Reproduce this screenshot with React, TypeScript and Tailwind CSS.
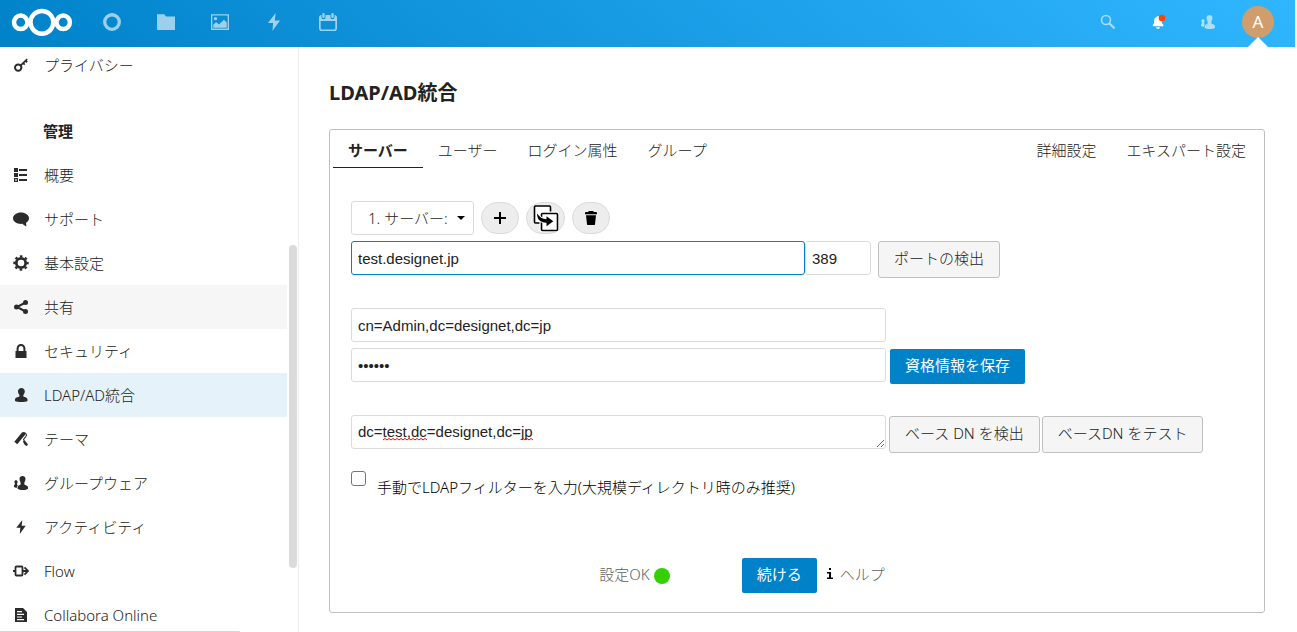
import type { ReactNode } from 'react';

type IconProps = { className?: string };

const Svg = ({ className = 'size-4', children }: IconProps & { children: ReactNode }) => (
  <svg viewBox="0 0 16 16" className={className} fill="currentColor" aria-hidden="true">
    {children}
  </svg>
);

const KeyIcon = (p: IconProps) => (
  <Svg {...p}>
    <circle cx="5.2" cy="10.6" r="3.2" fill="none" stroke="currentColor" strokeWidth="2" />
    <path d="M6.9 8.1 13.6 1.4l1.2 1.2-1 1 1 1-1.5 1.5-1-1-1 1 1 1-1.2 1.2-1-1L8.200 9.400z" />
  </Svg>
);

const ListIcon = (p: IconProps) => (
  <Svg {...p}>
    <path d="M1 1h4v4H1zM1 6h4v4H1zM6 2h8v2H6zM6 7h8v2H6zM6 12h8v2H6z" />
    <path d="M1 11h4v4H1zm1.200 1.200v1.600h1.600v-1.600z" fillRule="evenodd" />
  </Svg>
);

const CommentIcon = (p: IconProps) => (
  <Svg {...p}>
    <path d="M8 1.500c4.400 0 8 2.500 8 5.700 0 1.900-1.200 3.500-3 4.500.1 1.300.4 2.600.4 3.800-1.600-.6-3-1.500-4-2.700-.4.1-.9.1-1.400.1-4.400 0-8-2.500-8-5.700S3.600 1.500 8 1.500z" />
  </Svg>
);

const GearIcon = (p: IconProps) => (
  <Svg {...p}>
    <circle cx="8" cy="8" r="4.700" fill="none" stroke="currentColor" strokeWidth="2.800" />
    <circle cx="8" cy="8" r="6.700" fill="none" stroke="currentColor" strokeWidth="2" strokeDasharray="2.600 2.662" strokeDashoffset="1.300" />
  </Svg>
);

const ShareIcon = (p: IconProps) => (
  <Svg {...p}>
    <path d="M12.500 3.500 4 8l8.500 4.500" fill="none" stroke="currentColor" strokeWidth="2" />
    <circle cx="3.500" cy="8" r="2.500" />
    <circle cx="12.500" cy="3.500" r="2.500" />
    <circle cx="12.500" cy="12.500" r="2.500" />
  </Svg>
);

const LockIcon = (p: IconProps) => (
  <Svg {...p}>
    <path d="M8 1C5.500 1 3.600 2.900 3.600 5.400V8H2.500v7h11V8h-1.100V5.400C12.400 2.900 10.500 1 8 1zm0 2c1.400 0 2.400 1 2.400 2.400V8H5.600V5.400C5.600 4 6.600 3 8 3z" />
  </Svg>
);

const UserIcon = (p: IconProps) => (
  <Svg {...p}>
    <path d="M8.400 1C6.500 1 5 2.400 5 4.300c0 1.500.5 2.700 1.400 3.600.2.900 0 1.700-.6 1.900C3.500 10.600 2 11 2 12.600V14c1.500.7 3.700 1 6.300 1s4.900-.3 6.200-1v-1.400c0-1.600-1.500-2-3.500-2.800-.6-.2-.8-1-.6-1.900.9-.9 1.400-2.100 1.400-3.600C11.800 2.400 10.300 1 8.400 1z" />
  </Svg>
);

const GroupIcon = (p: IconProps) => (
  <Svg {...p}>
    <path d="M9.500 1C7.700 1 6.500 2.200 6.500 3.800c0 1.200.3 2.300.9 3.200.5 1.600.3 2.700-.5 3-1.600.5-2.300 1.200-2.300 2.400v1.300c1 .9 2.900 1.300 5.300 1.300 2.300 0 4.200-.4 5.100-1.300v-1.300c0-1.200-.9-1.800-2.800-2.400-.9-.3-1.100-1.400-.6-3 .6-.9.900-2 .9-3.200 0-1.600-1.200-2.800-3-2.800z" />
    <path d="M3 5.200c-1 0-1.600.7-1.600 1.500 0 .7.200 1.300.5 1.700.2.700.1 1.100-.3 1.300-.4.200-.6.500-.6.900v1.500c.5.500 1.500.8 2.800.8 0-1.300.4-2.100 1.500-2.800-.9-.2-1.500-.7-1.200-1.700.3-.4.500-1 .5-1.700 0-.8-.6-1.500-1.600-1.500z" />
  </Svg>
);

const ThemeIcon = (p: IconProps) => (
  <Svg {...p}>
    <path d="M2.800 12 10 3.300" fill="none" stroke="currentColor" strokeWidth="3.800" />
    <circle cx="10.300" cy="2.900" r="1.900" />
    <path d="M11 1.800c2.300.4 3 2 2 3.500L10.600 8.400l.8 2.100" fill="none" stroke="currentColor" strokeWidth="1.100" />
    <path d="m10 10.200 1.800-.6 3.200 4-1.200 1.400c-2-.8-3.400-2.500-3.800-4.800z" />
  </Svg>
);

const BoltIcon = (p: IconProps) => (
  <Svg {...p}>
    <path d="M9.500 0 2.600 8.800h4.600L6.600 16l6.800-9.400H8.700z" />
  </Svg>
);

const SmallBoltIcon = ({ className = '' }: IconProps) => <BoltIcon className={`${className} p-px`} />;

const FlowIcon = (p: IconProps) => (
  <Svg {...p}>
    <path d="M8.500 12.500H3.500a1 1 0 0 1-1-1v-7a1 1 0 0 1 1-1h5a1 1 0 0 1 1 1v7a1 1 0 0 1-1 1zM0 8h2.500M9.500 8H15M11.500 4.300 15 8l-3.500 3.700" fill="none" stroke="currentColor" strokeWidth="1.800" />
  </Svg>
);

const DocIcon = (p: IconProps) => (
  <Svg {...p}>
    <path fillRule="evenodd" d="M2 1h8l4 4v10H2zm2 3v1.200h5V4zm0 2.700v1.200h7V6.700zm0 2.700v1.200h5V9.400zm0 2.600v1.200h7V12z" />
  </Svg>
);

const FolderIcon = (p: IconProps) => (
  <Svg {...p}>
    <path d="M0 1h6.500L8 3.200h8V15H0z" />
  </Svg>
);

const PictureIcon = (p: IconProps) => (
  <Svg {...p}>
    <path fillRule="evenodd" d="M0 1h16v14H0zm1.200 1.200v11.600h13.600V2.200z" />
    <circle cx="4" cy="5" r="1.500" />
    <path d="M2 13V10.500L4.500 8l2.600 2.300L11.500 6 14 8.500V13z" />
  </Svg>
);

const CalendarIcon = (p: IconProps) => (
  <Svg {...p}>
    <path d="M4 0c-.6 0-1 .4-1 1v2.500a1 1 0 0 0 2 0V1c0-.6-.4-1-1-1zm8 0c-.6 0-1 .4-1 1v2.500a1 1 0 0 0 2 0V1c0-.6-.4-1-1-1z" />
    <path fillRule="evenodd" d="M2.300 1.700C1 1.700 0 2.700 0 4v9.700C0 15 1 16 2.300 16h11.400c1.300 0 2.300-1 2.300-2.300V4c0-1.300-1-2.300-2.200-2.300v2a1.800 1.800 0 0 1-3.600 0v-2H5.800v2a1.800 1.800 0 0 1-3.600 0zM1.500 7.200h13v6.300c0 .6-.5 1.100-1.100 1.100H2.600c-.6 0-1.100-.5-1.100-1.100z" />
  </Svg>
);

const SearchIcon = (p: IconProps) => (
  <Svg {...p}>
    <circle cx="6" cy="6" r="4.500" fill="none" stroke="currentColor" strokeWidth="1.600" />
    <path d="m9.300 9.300 5.300 5.200" stroke="currentColor" strokeWidth="2.200" />
  </Svg>
);

const BellIcon = (p: IconProps) => (
  <Svg {...p}>
    <path d="M8 2C7.500 2 7.100 2.300 6.900 2.800 4.800 3.400 4.200 5 4.200 7.300c0 2-.4 2.600-1.400 3.500v1.500h10.500v-1.500c-1.100-.9-1.500-1.500-1.500-3.500 0-2.300-.6-3.900-2.700-4.500C8.900 2.300 8.500 2 8 2zM6 13.300c.2 1 1 1.500 2 1.500s1.800-.5 2-1.500z" />
    <circle cx="12" cy="4" r="3.300" fill="#ff4402" />
  </Svg>
);

const TrashIcon = (p: IconProps) => (
  <Svg {...p}>
    <path d="M6 1 5 2H3a1 1 0 0 0-1 1v1.200h12V3a1 1 0 0 0-1-1h-2l-1-1zM3 5.200l1 9.300c0 .3.300.5.600.5h6.800c.3 0 .6-.2.600-.5l1-9.300z" />
  </Svg>
);

const PlusIcon = (p: IconProps) => (
  <Svg {...p}>
    <path d="M7 2h2v5h5v2H9v5H7V9H2V7h5z" />
  </Svg>
);

const CopyConfigIcon = () => (
  <svg viewBox="0 0 26 28" className="h-7 w-[26px] shrink-0" fill="none" aria-hidden="true">
    <rect x="1.500" y="2" width="16" height="17" rx="1" fill="#fff" stroke="#000" strokeWidth="1.600" />
    <rect x="8.500" y="9.500" width="16" height="17" rx="1" fill="#fff" stroke="#fff" strokeWidth="4" />
    <rect x="8.500" y="9.500" width="16" height="17" rx="1" fill="#fff" stroke="#000" strokeWidth="1.600" />
    <path d="M4 9.500c.2 3.600.8 5.500 3 7.300 1.800 1.400 4 2 6.500 1.900v3.600l6.800-5-6.800-5v3C9.500 15.200 6.500 13 4 9.500z" fill="#000" stroke="#fff" strokeWidth="1.600" paintOrder="stroke" />
  </svg>
);

const Logo = () => (
  <svg viewBox="0 0 62 30" className="h-[30px] w-[62px]" fill="none" stroke="#fff" strokeWidth="4.500" aria-hidden="true">
    <circle cx="9.700" cy="15.300" r="6.700" />
    <circle cx="30.900" cy="15.300" r="11.400" />
    <circle cx="52.200" cy="15.300" r="6.700" />
  </svg>
);

const apps = [
  {
    label: 'ダッシュボード',
    icon: (
      <Svg className="size-[18px]">
        <circle cx="8" cy="8" r="6.500" fill="none" stroke="currentColor" strokeWidth="3" />
      </Svg>
    ),
  },
  { label: 'ファイル', icon: <FolderIcon className="size-[18px]" /> },
  { label: '写真', icon: <PictureIcon className="size-[18px]" /> },
  { label: 'アクティビティ', icon: <BoltIcon className="size-[18px]" /> },
  { label: 'カレンダー', icon: <CalendarIcon className="size-[18px]" /> },
];

const navItems = [
  { label: '概要', Icon: ListIcon },
  { label: 'サポート', Icon: CommentIcon },
  { label: '基本設定', Icon: GearIcon },
  { label: '共有', Icon: ShareIcon, state: 'hover' },
  { label: 'セキュリティ', Icon: LockIcon },
  { label: 'LDAP/AD統合', Icon: UserIcon, state: 'active' },
  { label: 'テーマ', Icon: ThemeIcon },
  { label: 'グループウェア', Icon: GroupIcon },
  { label: 'アクティビティ', Icon: SmallBoltIcon },
  { label: 'Flow', Icon: FlowIcon },
  { label: 'Collabora Online', Icon: DocIcon },
];

function NavItem({ label, Icon, state }: { label: string; Icon: (p: IconProps) => ReactNode; state?: string }) {
  const bg = state === 'active' ? 'bg-[#e5f2fa]' : state === 'hover' ? 'bg-[#f6f6f6]' : '';
  return (
    <li>
      <a href="#" className={`flex h-11 items-center gap-[15px] pl-[13px] font-light text-[#222] ${bg}`}>
        <Icon className="size-4 shrink-0 text-[#2b2b2b]" />
        <span>{label}</span>
      </a>
    </li>
  );
}

function Header() {
  return (
    <header className="flex h-[47px] shrink-0 items-start justify-between bg-[linear-gradient(40deg,#0082c9_0%,#30b6ff_100%)] pr-3 pl-[11px] text-white">
      <div className="flex h-11 items-center">
        <a href="#" aria-label="Nextcloud" className="mr-3.5">
          <Logo />
        </a>
        <nav className="flex">
          {apps.map((a) => (
            <a key={a.label} href="#" aria-label={a.label} className="flex h-11 w-[54px] items-center justify-center pr-1 opacity-60">
              {a.icon}
            </a>
          ))}
        </nav>
      </div>
      <div className="flex">
        <button aria-label="検索" className="flex h-11 w-[50px] items-center justify-center opacity-60">
          <SearchIcon />
        </button>
        <button aria-label="通知" className="flex h-11 w-[50px] items-center justify-center">
          <BellIcon />
        </button>
        <button aria-label="連絡先" className="flex h-11 w-[50px] items-center justify-center opacity-60">
          <GroupIcon />
        </button>
        <button aria-label="設定" className="relative flex h-[47px] w-[50px] justify-center pt-1.5">
          <span className="flex size-8 items-center justify-center rounded-full bg-[#d09e6d] text-[17px]">A</span>
          <svg viewBox="0 0 20 10" className="absolute bottom-0 h-2.5 w-5" fill="#fff" aria-hidden="true">
            <path d="M0 10 10 0l10 10z" />
          </svg>
        </button>
      </div>
    </header>
  );
}

function Sidebar() {
  return (
    <aside className="flex w-[299px] shrink-0 overflow-hidden border-r border-[#ededed]">
      <nav className="-mt-1 w-[287px]">
        <ul>
          <NavItem label="プライバシー" Icon={KeyIcon} />
        </ul>
        <h2 className="mt-[22px] flex h-11 items-center pl-[43px] font-bold text-[#222]">管理</h2>
        <ul>
          {navItems.map((n) => (
            <NavItem key={n.label} {...n} />
          ))}
        </ul>
      </nav>
      <div className="ml-0.5 w-2 pt-[198px]">
        <div className="h-[323px] rounded-full bg-[#dbdbdb]" />
      </div>
    </aside>
  );
}

const field =
  "h-[34px] rounded-[3px] border border-[#dbdbdb] bg-white px-1.5 font-['Liberation_Sans','Noto_Sans_CJK_JP',sans-serif] text-[15px] text-[#222] outline-none";
const grayButton = 'h-[37px] rounded-[3px] border border-[#c0c0c0] bg-[#f5f5f5] px-[15px] pb-[3px] font-light text-[#222]';
const blueButton = 'h-[35px] rounded-[2px] bg-[#0082c9] px-[15px] pb-[3px] text-white';
const roundButton =
  'flex h-8 items-center justify-center rounded-full border border-[#dbdbdb] bg-[#ededed] text-black';

function Tab({ label, active }: { label: string; active?: boolean }) {
  return (
    <button
      role="tab"
      aria-selected={!!active}
      className={`h-[35px] border-b px-[15px] ${active ? 'border-[#222] font-bold text-[#222]' : 'border-transparent font-light text-[#222]'}`}
    >
      {label}
    </button>
  );
}

function LdapForm() {
  return (
    <form className="px-[18px] pt-[33px]" onSubmit={(e) => e.preventDefault()}>
      <div className="flex items-center gap-[7px]">
        <div className="relative">
          <select
            aria-label="サーバー設定"
            className="h-[34px] w-[123px] appearance-none rounded-[3px] border border-[#dbdbdb] bg-white pl-4 font-light text-[#222]"
          >
            <option>1. サーバー:</option>
          </select>
          <svg viewBox="0 0 8 4" className="pointer-events-none absolute top-[15px] right-[9px] h-1 w-2" aria-hidden="true">
            <path d="M0 0h8L4 4z" />
          </svg>
        </div>
        <button type="button" aria-label="設定を追加" className={`${roundButton} w-[38px]`}>
          <PlusIcon />
        </button>
        <button type="button" aria-label="設定をコピー" className={`${roundButton} w-[39px]`}>
          <CopyConfigIcon />
        </button>
        <button type="button" aria-label="設定を削除" className={`${roundButton} w-[38px]`}>
          <TrashIcon />
        </button>
      </div>

      <div className="mt-1.5 flex items-start">
        <input aria-label="ホスト" defaultValue="test.designet.jp" className={`${field} w-[454px] border-[#0082c9]!`} />
        <input aria-label="ポート" defaultValue="389" className={`${field} w-[66px]`} />
        <button type="button" className={`${grayButton} ml-[7px]`}>ポートの検出</button>
      </div>

      <div className="mt-[30px] flex">
        <input aria-label="ユーザーDN" defaultValue="cn=Admin,dc=designet,dc=jp" className={`${field} w-[535px]`} />
      </div>
      <div className="mt-1.5 flex items-start gap-1">
        <input type="password" aria-label="パスワード" defaultValue="secret" className={`${field} w-[535px]`} />
        <button type="button" className={`${blueButton} mt-px`}>資格情報を保存</button>
      </div>

      <div className="mt-[31px] flex items-start">
        <div className="relative mr-[3px] flex">
          <textarea
            aria-label="ベースDN"
            rows={1}
            spellCheck={false}
            defaultValue="dc=test,dc=designet,dc=jp"
            className={`${field} w-[535px] resize overflow-hidden pt-[7px] leading-[18px]`}
          />
          <svg viewBox="0 0 152 3" className="pointer-events-none absolute top-[23px] left-8 h-[3px] w-[152px]" fill="none" stroke="#f00" aria-hidden="true">
            <path d="M0 2l2-1.500 2 1.500 2-1.500 2 1.500 2-1.500 2 1.500 2-1.500 2 1.500 2-1.500 2 1.500 2-1.500 2 1.500 2-1.500 2 1.500 2-1.500 2 1.500 2-1.500 2 1.500 2-1.500 2 1.500 2-1.500 2 1.500M138 2l2-1.500 2 1.500 2-1.500 2 1.500 2-1.500 2 1.500" />
          </svg>
        </div>
        <div className="mt-px flex gap-0.5">
          <button type="button" className={grayButton}>ベース DN を検出</button>
          <button type="button" className={grayButton}>ベースDN をテスト</button>
        </div>
      </div>

      <div className="mt-[17px] flex items-start gap-[11px]">
        <input
          id="manual-filter"
          type="checkbox"
          className="mt-px size-[15px] appearance-none rounded-[3px] border border-[#767676] bg-white"
        />
        <label htmlFor="manual-filter" className="pt-1.5 leading-[22px] font-light text-black">
          手動でLDAPフィルターを入力(大規模ディレクトリ時のみ推奨)
        </label>
      </div>

      <div className="mt-[60px] mb-4 flex items-center justify-center pr-[110px] text-[#606060]">
        <span className="pb-1 font-light">設定OK</span>
        <span className="mr-[72px] ml-1 size-4 rounded-full bg-[#37ce02]" />
        <button type="submit" className={blueButton}>続ける</button>
        <a href="#" className="ml-[9px] flex items-center gap-1.5 pb-1 font-light">
          <svg viewBox="0 0 8 11" className="h-[11px] w-2" fill="#000" aria-hidden="true">
            <path d="M3 0h2v2H3zM1 4h4v5.500h2V11H1V9.500h2v-4H1z" />
          </svg>
          <span>ヘルプ</span>
        </a>
      </div>
    </form>
  );
}

export default function App() {
  return (
    <div className="relative flex h-screen flex-col overflow-hidden bg-white pr-0.5 font-['Noto_Sans','Noto_Sans_CJK_JP',sans-serif] text-[15px] leading-[22px] text-[#222]">
      <Header />
      <div className="flex min-h-0 flex-1">
        <Sidebar />
        <main className="min-w-0 flex-1 overflow-hidden px-[30px] pt-[30px]">
          <h1 className="mb-5 text-xl leading-8 font-bold">LDAP/AD統合</h1>
          <section className="rounded-[3px] border border-[#c0c0c0] p-[3px]">
            <div role="tablist" className="flex">
              <Tab label="サーバー" active />
              <Tab label="ユーザー" />
              <Tab label="ログイン属性" />
              <Tab label="グループ" />
              <div className="flex-1" />
              <Tab label="詳細設定" />
              <Tab label="エキスパート設定" />
            </div>
            <LdapForm />
          </section>
        </main>
      </div>
      <div className="absolute bottom-0 left-0 h-px w-60 rounded-tr bg-[#d5d5d5]" />
    </div>
  );
}
